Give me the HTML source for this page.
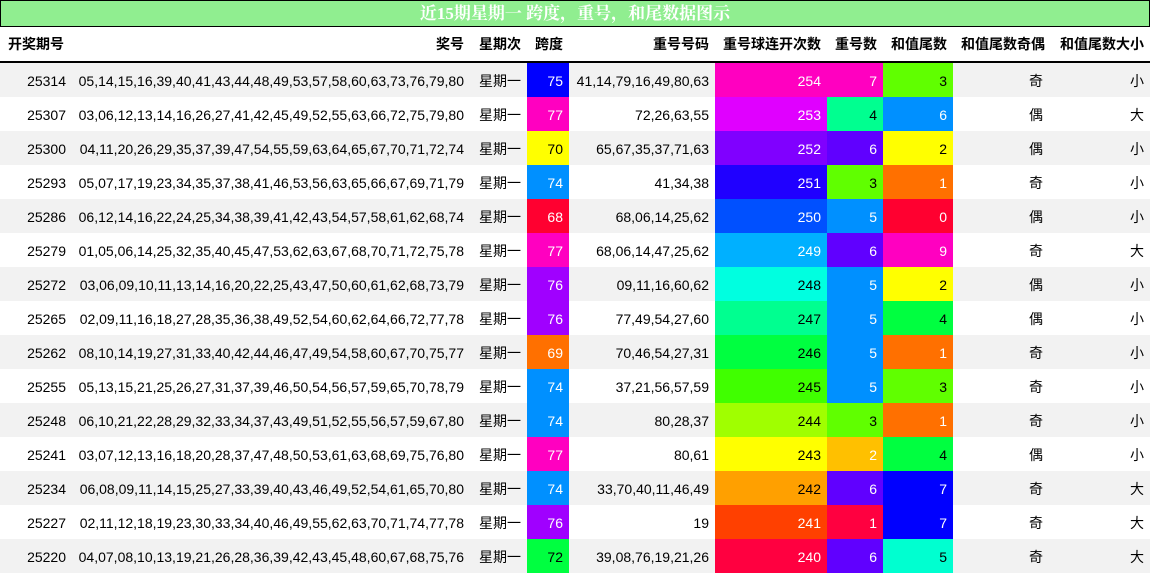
<!DOCTYPE html>
<html><head><meta charset="utf-8"><style>
body{margin:0;width:1150px;height:574px;overflow:hidden;background:#fff;font-family:"Liberation Sans","Noto Sans CJK SC",sans-serif;font-size:14px;color:#000}
.t{position:absolute;left:0;top:0;width:1148px;height:25px;background:#90ee90;border:1px solid #000;color:#fff;font-weight:bold;font-size:17px;text-align:center;line-height:26px;font-family:"Liberation Serif","Noto Serif CJK SC",serif}
table{position:absolute;left:0;top:27px;border-collapse:collapse;table-layout:fixed;width:1150px}
td,th{padding:1px 6px 0 6px;white-space:nowrap;text-align:right;height:33px}
th{height:34px;padding:0 6px;font-weight:bold;border-bottom:2px solid #000;font-size:14px}
th.l{text-align:left;padding-left:8px}
tr:nth-child(even) td{background:#f2f2f2}
td.c{text-align:right;padding-right:8px}
.w{color:#fff}
</style></head><body>
<div class="t">近15期星期一 跨度，重号，和尾数据图示</div>
<table>
<colgroup><col style="width:72px"><col style="width:398px"><col style="width:57px"><col style="width:42px"><col style="width:146px"><col style="width:112px"><col style="width:56px"><col style="width:70px"><col style="width:98px"><col style="width:99px"></colgroup>
<tr><th class="l">开奖期号</th><th>奖号</th><th>星期次</th><th>跨度</th><th>重号号码</th><th>重号球连开次数</th><th>重号数</th><th>和值尾数</th><th>和值尾数奇偶</th><th>和值尾数大小</th></tr>
<tr><td>25314</td><td>05,14,15,16,39,40,41,43,44,48,49,53,57,58,60,63,73,76,79,80</td><td>星期一</td><td class="w" style="background:#0000ff!important">75</td><td>41,14,79,16,49,80,63</td><td class="w" style="background:#ff00c0!important">254</td><td class="w" style="background:#ff00c0!important">7</td><td style="background:#60ff00!important">3</td><td class="c">奇</td><td>小</td></tr>
<tr><td>25307</td><td>03,06,12,13,14,16,26,27,41,42,45,49,52,55,63,66,72,75,79,80</td><td>星期一</td><td class="w" style="background:#ff00c0!important">77</td><td>72,26,63,55</td><td class="w" style="background:#e000ff!important">253</td><td style="background:#00ff90!important">4</td><td class="w" style="background:#0090ff!important">6</td><td class="c">偶</td><td>大</td></tr>
<tr><td>25300</td><td>04,11,20,26,29,35,37,39,47,54,55,59,63,64,65,67,70,71,72,74</td><td>星期一</td><td style="background:#ffff00!important">70</td><td>65,67,35,37,71,63</td><td class="w" style="background:#8000ff!important">252</td><td class="w" style="background:#6000ff!important">6</td><td style="background:#ffff00!important">2</td><td class="c">偶</td><td>小</td></tr>
<tr><td>25293</td><td>05,07,17,19,23,34,35,37,38,41,46,53,56,63,65,66,67,69,71,79</td><td>星期一</td><td class="w" style="background:#0090ff!important">74</td><td>41,34,38</td><td class="w" style="background:#2000ff!important">251</td><td style="background:#60ff00!important">3</td><td class="w" style="background:#ff7000!important">1</td><td class="c">奇</td><td>小</td></tr>
<tr><td>25286</td><td>06,12,14,16,22,24,25,34,38,39,41,42,43,54,57,58,61,62,68,74</td><td>星期一</td><td class="w" style="background:#ff0030!important">68</td><td>68,06,14,25,62</td><td class="w" style="background:#0050ff!important">250</td><td class="w" style="background:#0090ff!important">5</td><td class="w" style="background:#ff0030!important">0</td><td class="c">偶</td><td>小</td></tr>
<tr><td>25279</td><td>01,05,06,14,25,32,35,40,45,47,53,62,63,67,68,70,71,72,75,78</td><td>星期一</td><td class="w" style="background:#ff00c0!important">77</td><td>68,06,14,47,25,62</td><td class="w" style="background:#00b0ff!important">249</td><td class="w" style="background:#6000ff!important">6</td><td class="w" style="background:#ff00c0!important">9</td><td class="c">奇</td><td>大</td></tr>
<tr><td>25272</td><td>03,06,09,10,11,13,14,16,20,22,25,43,47,50,60,61,62,68,73,79</td><td>星期一</td><td class="w" style="background:#a000ff!important">76</td><td>09,11,16,60,62</td><td style="background:#00ffe0!important">248</td><td class="w" style="background:#0090ff!important">5</td><td style="background:#ffff00!important">2</td><td class="c">偶</td><td>小</td></tr>
<tr><td>25265</td><td>02,09,11,16,18,27,28,35,36,38,49,52,54,60,62,64,66,72,77,78</td><td>星期一</td><td class="w" style="background:#a000ff!important">76</td><td>77,49,54,27,60</td><td style="background:#00ff90!important">247</td><td class="w" style="background:#0090ff!important">5</td><td style="background:#00ff40!important">4</td><td class="c">偶</td><td>小</td></tr>
<tr><td>25262</td><td>08,10,14,19,27,31,33,40,42,44,46,47,49,54,58,60,67,70,75,77</td><td>星期一</td><td class="w" style="background:#ff7000!important">69</td><td>70,46,54,27,31</td><td style="background:#00ff40!important">246</td><td class="w" style="background:#0090ff!important">5</td><td class="w" style="background:#ff7000!important">1</td><td class="c">奇</td><td>小</td></tr>
<tr><td>25255</td><td>05,13,15,21,25,26,27,31,37,39,46,50,54,56,57,59,65,70,78,79</td><td>星期一</td><td class="w" style="background:#0090ff!important">74</td><td>37,21,56,57,59</td><td style="background:#40ff00!important">245</td><td class="w" style="background:#0090ff!important">5</td><td style="background:#60ff00!important">3</td><td class="c">奇</td><td>小</td></tr>
<tr><td>25248</td><td>06,10,21,22,28,29,32,33,34,37,43,49,51,52,55,56,57,59,67,80</td><td>星期一</td><td class="w" style="background:#0090ff!important">74</td><td>80,28,37</td><td style="background:#a0ff00!important">244</td><td style="background:#60ff00!important">3</td><td class="w" style="background:#ff7000!important">1</td><td class="c">奇</td><td>小</td></tr>
<tr><td>25241</td><td>03,07,12,13,16,18,20,28,37,47,48,50,53,61,63,68,69,75,76,80</td><td>星期一</td><td class="w" style="background:#ff00c0!important">77</td><td>80,61</td><td style="background:#ffff00!important">243</td><td class="w" style="background:#ffc000!important">2</td><td style="background:#00ff40!important">4</td><td class="c">偶</td><td>小</td></tr>
<tr><td>25234</td><td>06,08,09,11,14,15,25,27,33,39,40,43,46,49,52,54,61,65,70,80</td><td>星期一</td><td class="w" style="background:#0090ff!important">74</td><td>33,70,40,11,46,49</td><td style="background:#ffa000!important">242</td><td class="w" style="background:#6000ff!important">6</td><td class="w" style="background:#0000ff!important">7</td><td class="c">奇</td><td>大</td></tr>
<tr><td>25227</td><td>02,11,12,18,19,23,30,33,34,40,46,49,55,62,63,70,71,74,77,78</td><td>星期一</td><td class="w" style="background:#a000ff!important">76</td><td>19</td><td class="w" style="background:#ff4000!important">241</td><td class="w" style="background:#ff0040!important">1</td><td class="w" style="background:#0000ff!important">7</td><td class="c">奇</td><td>大</td></tr>
<tr><td>25220</td><td>04,07,08,10,13,19,21,26,28,36,39,42,43,45,48,60,67,68,75,76</td><td>星期一</td><td style="background:#00ff40!important">72</td><td>39,08,76,19,21,26</td><td class="w" style="background:#ff0040!important">240</td><td class="w" style="background:#6000ff!important">6</td><td style="background:#00ffd0!important">5</td><td class="c">奇</td><td>大</td></tr>
</table>
</body></html>
